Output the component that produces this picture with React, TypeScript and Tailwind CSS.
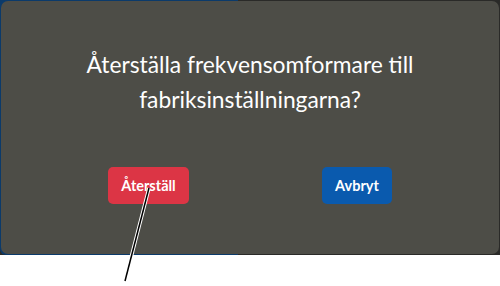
export default function App() {
  return (
    <div className="relative w-[500px] h-[286px] bg-white overflow-hidden" style={{ fontFamily: "Lato, 'Open Sans', sans-serif" }}>
      {/* device screen behind the dialog */}
      <div className="h-[255px] flex bg-[#2a2a28]">
        <div className="w-[238px] bg-[#0b3a6a] rounded-bl-[6px]" />
        <div className="flex-1" />
      </div>

      {/* dialog */}
      <div className="absolute left-[1px] top-[1px] w-[498px] h-[253px] rounded-[7px] bg-[#4d4d47] flex flex-col items-center">
        <p className="mt-[46px] text-center text-[22.8px] leading-[35px] text-white">
          Återställa frekvensomformare till
          <br />
          fabriksinställningarna?
        </p>
        <div className="mt-[50px] flex gap-[133px]">
          <button className="w-[81px] h-[37px] rounded-[5px] bg-[#dc3545] text-white text-[14.5px] font-bold">
            Återställ
          </button>
          <button className="w-[70px] h-[37px] rounded-[5px] bg-[#0a5aae] text-white text-[14.5px] font-bold">
            Avbryt
          </button>
        </div>
      </div>

      {/* callout line */}
      <svg className="absolute left-0 top-0 pointer-events-none" width="500" height="286">
        <line x1="149" y1="188" x2="125" y2="281" stroke="#fff" strokeWidth="3.5" />
        <line x1="149" y1="188" x2="125" y2="281" stroke="#000" strokeWidth="1.5" />
      </svg>
    </div>
  );
}
